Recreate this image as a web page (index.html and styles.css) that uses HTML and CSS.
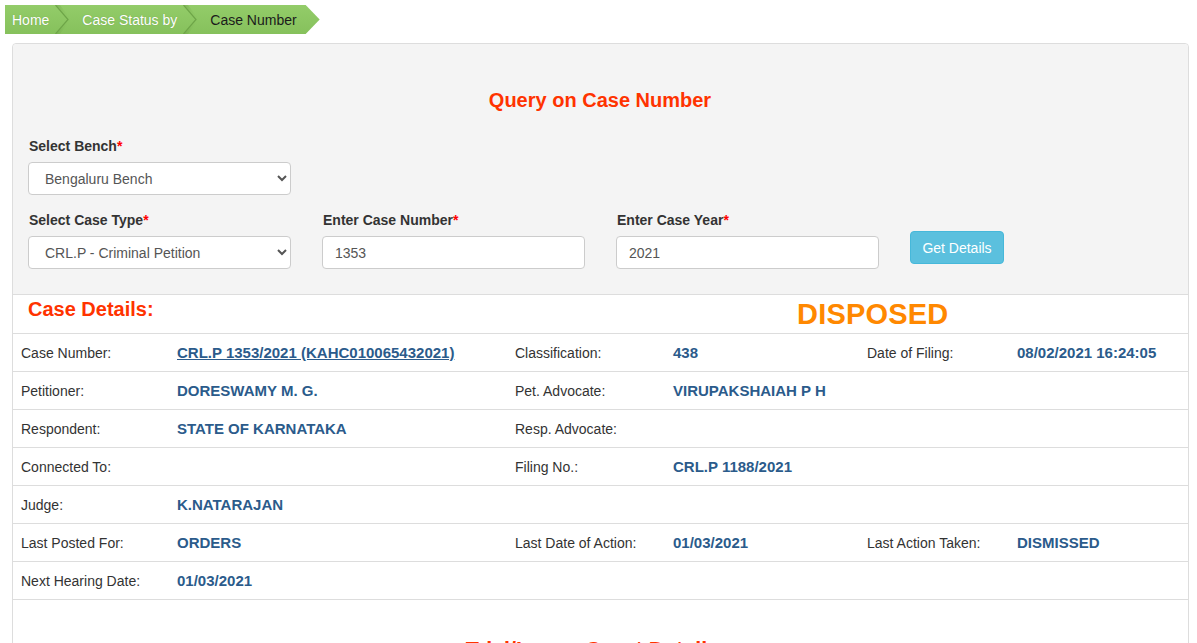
FILE: index.html
```html
<!DOCTYPE html>
<html>
<head>
<meta charset="utf-8">
<link rel="stylesheet" href="styles.css">
</head>
<body>
<div class="page">
  <nav class="crumbs">
    <span class="crumb first">Home</span>
    <svg class="sep" width="16" height="29" viewBox="0 0 16 29">
      <defs><linearGradient id="sh1" x1="0" y1="0" x2="1" y2="0"><stop offset="0" stop-color="#6da245" stop-opacity="0.55"/><stop offset="1" stop-color="#8dc862" stop-opacity="0"/></linearGradient></defs>
      <polygon points="1,0 14,14.5 1,29 5,29 16,14.5 5,0" fill="url(#sh1)"/>
      <polyline points="0.5,0 13,14.5 0.5,29" fill="none" stroke="#6ea548" stroke-width="1.2"/>
    </svg>
    <span class="crumb">Case Status by</span>
    <svg class="sep" width="16" height="29" viewBox="0 0 16 29">
      <defs><linearGradient id="sh2" x1="0" y1="0" x2="1" y2="0"><stop offset="0" stop-color="#6da245" stop-opacity="0.55"/><stop offset="1" stop-color="#8dc862" stop-opacity="0"/></linearGradient></defs>
      <polygon points="1,0 14,14.5 1,29 5,29 16,14.5 5,0" fill="url(#sh2)"/>
      <polyline points="0.5,0 13,14.5 0.5,29" fill="none" stroke="#6ea548" stroke-width="1.2"/>
    </svg>
    <span class="crumb active">Case Number</span>
  </nav>

  <div class="panel">
    <section class="query">
      <h2 class="query-title">Query on Case Number</h2>
      <div class="form-row">
        <div class="field">
          <label class="flabel">Select Bench<span class="req">*</span></label>
          <select class="control"><option>Bengaluru Bench</option></select>
        </div>
      </div>
      <div class="form-row">
        <div class="field">
          <label class="flabel">Select Case Type<span class="req">*</span></label>
          <select class="control"><option>CRL.P - Criminal Petition</option></select>
        </div>
        <div class="field">
          <label class="flabel">Enter Case Number<span class="req">*</span></label>
          <input class="control" type="text" value="1353">
        </div>
        <div class="field">
          <label class="flabel">Enter Case Year<span class="req">*</span></label>
          <input class="control" type="text" value="2021">
        </div>
        <button class="btn-info">Get Details</button>
      </div>
    </section>

    <div class="details-head">
      <h3 class="details-title">Case Details:</h3>
      <span class="status">DISPOSED</span>
    </div>

    <div class="row">
      <span class="lbl">Case Number:</span>
      <a class="val link" href="#">CRL.P 1353/2021 (KAHC010065432021)</a>
      <span class="lbl">Classification:</span>
      <span class="val">438</span>
      <span class="lbl">Date of Filing:</span>
      <span class="val">08/02/2021 16:24:05</span>
    </div>
    <div class="row">
      <span class="lbl">Petitioner:</span>
      <span class="val">DORESWAMY M. G.</span>
      <span class="lbl">Pet. Advocate:</span>
      <span class="val">VIRUPAKSHAIAH P H</span>
      <span></span><span></span>
    </div>
    <div class="row">
      <span class="lbl">Respondent:</span>
      <span class="val">STATE OF KARNATAKA</span>
      <span class="lbl">Resp. Advocate:</span>
      <span class="val"></span>
      <span></span><span></span>
    </div>
    <div class="row">
      <span class="lbl">Connected To:</span>
      <span class="val"></span>
      <span class="lbl">Filing No.:</span>
      <span class="val">CRL.P 1188/2021</span>
      <span></span><span></span>
    </div>
    <div class="row">
      <span class="lbl">Judge:</span>
      <span class="val">K.NATARAJAN</span>
      <span></span><span></span><span></span><span></span>
    </div>
    <div class="row">
      <span class="lbl">Last Posted For:</span>
      <span class="val">ORDERS</span>
      <span class="lbl">Last Date of Action:</span>
      <span class="val">01/03/2021</span>
      <span class="lbl">Last Action Taken:</span>
      <span class="val">DISMISSED</span>
    </div>
    <div class="row">
      <span class="lbl">Next Hearing Date:</span>
      <span class="val">01/03/2021</span>
      <span></span><span></span><span></span><span></span>
    </div>

    <h3 class="lower-title">Trial/Lower Court Details</h3>
  </div>
</div>
</body>
</html>
```

FILE: styles.css
```css
html, body {
  margin: 0;
  padding: 0;
  background: #ffffff;
  font-family: "Liberation Sans", Arial, sans-serif;
  font-size: 14px;
  color: #333333;
}

.page {
  padding: 5px 8px 0 5px;
  height: 638px;
  overflow: hidden;
}

/* breadcrumb */
.crumbs {
  display: inline-flex;
  align-items: center;
  height: 29px;
  background: linear-gradient(#93cc69, #86c15c);
  clip-path: polygon(0 0, calc(100% - 14px) 0, 100% 50%, calc(100% - 14px) 100%, 0 100%);
}

.crumb {
  color: #ffffff;
  font-size: 14px;
  line-height: 27px;
  padding: 2px 6px 0 11px;
  text-shadow: 0 0 1px rgba(60, 100, 30, 0.4);
}

.crumb.first {
  padding: 2px 6px 0 7px;
}

.crumb.active {
  color: #1b1b1b;
  text-shadow: none;
  padding: 2px 23px 0 11px;
}

.sep {
  display: block;
  flex: none;
}

/* panel */
.panel {
  margin: 9px 0 0 7px;
  width: 1175px;
  border: 1px solid #dddddd;
  border-radius: 4px;
  background: #ffffff;
}

.query {
  background: #f4f4f4;
  padding: 44px 16px 25px 15px;
  border-bottom: 1px solid #dddddd;
  border-radius: 4px 4px 0 0;
}

.query-title {
  margin: 0 0 24px 0;
  text-align: center;
  color: #ff3300;
  font-size: 20px;
  line-height: 24px;
  font-weight: bold;
}

.form-row {
  display: flex;
  gap: 31px;
  align-items: flex-end;
}

.form-row + .form-row {
  margin-top: 15px;
}

.field {
  display: flex;
  flex-direction: column;
  width: 263px;
}

.flabel {
  font-weight: bold;
  font-size: 14px;
  line-height: 20px;
  color: #333333;
  margin-bottom: 6px;
  padding-left: 1px;
}

.req {
  color: #ff0000;
}

.control {
  box-sizing: border-box;
  width: 263px;
  height: 33px;
  border: 1px solid #cccccc;
  border-radius: 4px;
  background: #ffffff;
  color: #555555;
  font-family: "Liberation Sans", Arial, sans-serif;
  font-size: 14px;
  padding: 6px 12px;
  margin: 0;
  outline: none;
}

.btn-info {
  height: 33px;
  width: 94px;
  margin-bottom: 5px;
  background: #5bc0de;
  border: 1px solid #46b8da;
  border-radius: 4px;
  color: #ffffff;
  font-family: "Liberation Sans", Arial, sans-serif;
  font-size: 14px;
  padding: 0;
}

/* case details */
.details-head {
  display: flex;
  align-items: flex-start;
  height: 38px;
  border-bottom: 1px solid #dddddd;
}

.details-title {
  margin: 2px 0 0 15px;
  color: #ff3300;
  font-size: 20px;
  line-height: 24px;
  font-weight: bold;
  width: 769px;
}

.status {
  margin-top: 2px;
  color: #ff8800;
  font-size: 29px;
  line-height: 34px;
  font-weight: bold;
  letter-spacing: 0.2px;
}

.row {
  display: grid;
  grid-template-columns: 156px 338px 158px 194px 150px 1fr;
  align-items: center;
  height: 37px;
  padding: 0 8px;
  border-bottom: 1px solid #dddddd;
}

.lbl {
  color: #333333;
  font-size: 14px;
}

.val {
  color: #2b5b8b;
  font-weight: bold;
  font-size: 15px;
}

.link {
  text-decoration: underline;
}

.lower-title {
  margin: 38px 16px 0 0;
  text-align: center;
  color: #ff3300;
  font-size: 21.5px;
  line-height: 24px;
  font-weight: bold;
}
```
